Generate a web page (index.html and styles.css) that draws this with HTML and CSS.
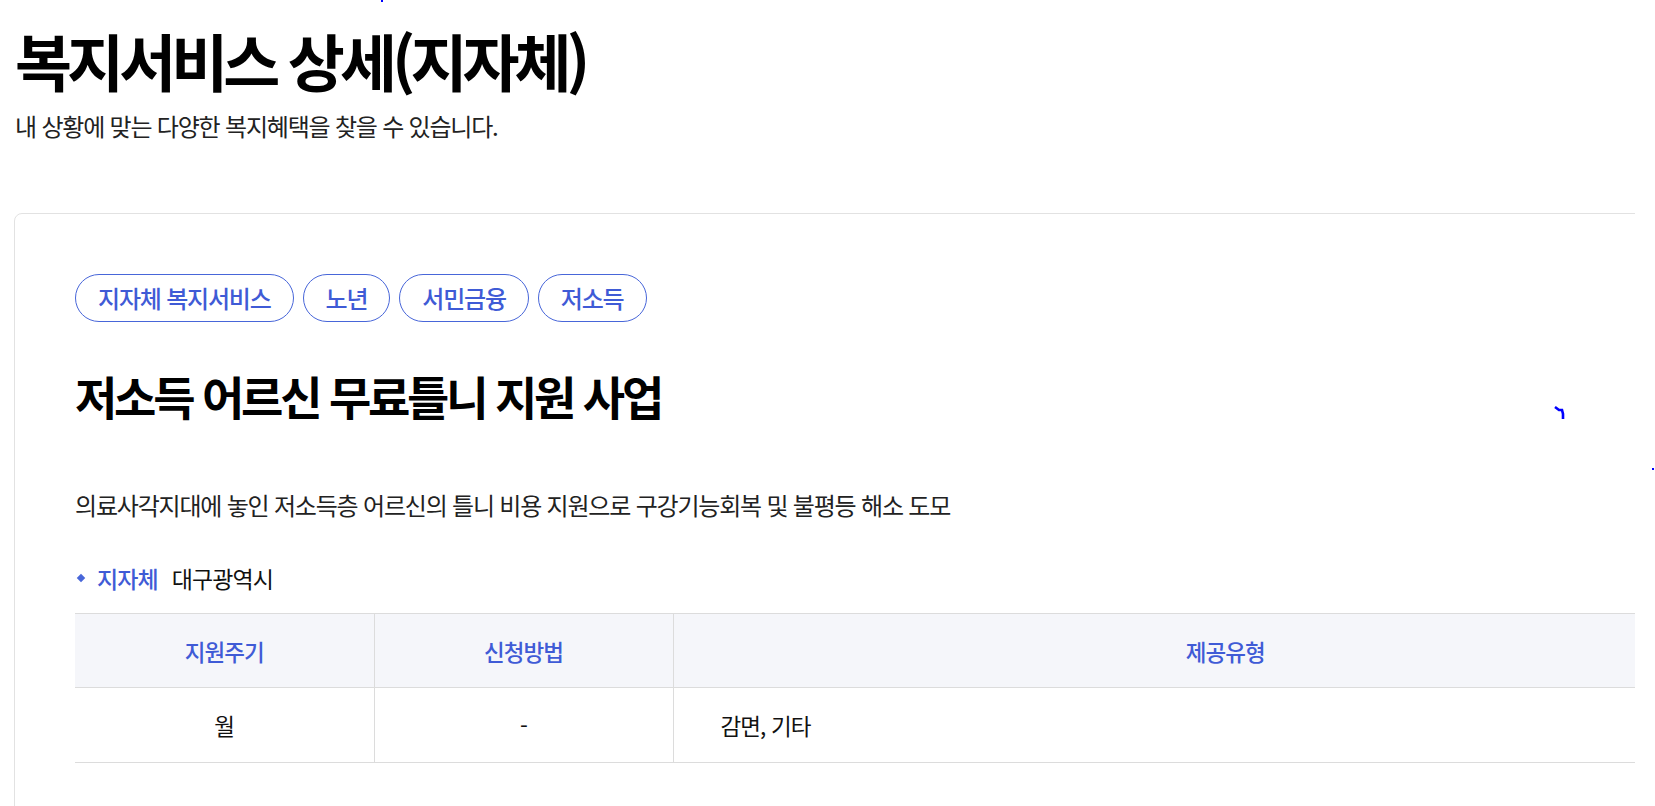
FILE: index.html
```html
<!DOCTYPE html>
<html lang="ko">
<head>
    <meta charset="utf-8">
    <link rel="stylesheet" href="styles.css">
</head>
<body>
    <div class="page">
        <div class="page-head">
            <h1 class="page-title">복지서비스 상세(지자체)</h1>
            <p class="page-lead">내 상황에 맞는 다양한 복지혜택을 찾을 수 있습니다.</p>
        </div>

        <div class="card-clip">
            <div class="card">
                <ul class="tags">
                    <li class="tag">지자체 복지서비스</li>
                    <li class="tag">노년</li>
                    <li class="tag">서민금융</li>
                    <li class="tag">저소득</li>
                </ul>

                <h2 class="service-title">저소득 어르신 무료틀니 지원 사업</h2>

                <p class="service-desc">의료사각지대에 놓인 저소득층 어르신의 틀니 비용 지원으로 구강기능회복 및 불평등 해소 도모</p>

                <div class="info-row">
                    <span class="info-bullet"></span>
                    <span class="info-label">지자체</span>
                    <span class="info-value">대구광역시</span>
                </div>

                <table class="info-table">
                    <colgroup>
                        <col class="col-cycle">
                        <col class="col-method">
                        <col class="col-type">
                    </colgroup>
                    <thead>
                        <tr>
                            <th>지원주기</th>
                            <th>신청방법</th>
                            <th>제공유형</th>
                        </tr>
                    </thead>
                    <tbody>
                        <tr>
                            <td>월</td>
                            <td>-</td>
                            <td class="cell-left">감면, 기타</td>
                        </tr>
                    </tbody>
                </table>
            </div>
        </div>
    </div>

    <!-- stray focus marks seen on the captured page -->
    <svg class="mark mark-top" width="4" height="4"><rect x="1" y="0" width="2" height="2" fill="#0000ff"/></svg>
    <svg class="mark mark-hook" width="14" height="16"><path d="M2 2 L6 5 L9 5 L10 9 L10 14" stroke="#0000ff" stroke-width="2.6" fill="none"/></svg>
    <svg class="mark mark-dot" width="3" height="3"><rect x="0" y="0" width="2" height="2" fill="#0000ff"/></svg>
</body>
</html>
```

FILE: styles.css
```css
body {
    margin: 0;
    font-family: "Noto Sans CJK KR", "Noto Sans", sans-serif;
    color: #111;
    background-color: white;
}

.page {
    padding: 0 20px 0 14px;
}

.page-head {
    padding-top: 20px;
    padding-left: 1px;
}

.page-title {
    margin: 0;
    font-size: 62px;
    line-height: 80px;
    font-weight: 700;
    letter-spacing: -0.08em;
    color: #000;
}

.page-lead {
    margin: 10px 0 0 0;
    font-size: 24px;
    line-height: 32px;
    letter-spacing: -0.05em;
    color: #222;
}

.card-clip {
    margin-top: 71px;
    overflow: hidden;
}

.card {
    width: 1702px;
    padding: 60px 60px 120px 60px;
    border: 1px solid #e2e2e2;
    border-radius: 8px;
}

.tags {
    display: flex;
    gap: 9px;
    margin: 0;
    padding: 0;
    list-style: none;
}

.tag {
    height: 46px;
    line-height: 46px;
    padding: 0 22px;
    border: 1px solid #4866d9;
    border-radius: 24px;
    font-size: 24px;
    font-weight: 500;
    letter-spacing: -0.05em;
    color: #3f5bd6;
}

.service-title {
    margin: 43px 0 0 0;
    font-size: 46px;
    line-height: 60px;
    font-weight: 700;
    letter-spacing: -0.07em;
    color: #000;
}

.service-desc {
    margin: 64px 0 0 0;
    font-size: 24px;
    line-height: 32px;
    letter-spacing: -0.05em;
    color: #222;
}

.info-row {
    display: flex;
    align-items: center;
    margin-top: 41px;
    font-size: 23px;
    line-height: 32px;
    letter-spacing: -0.04em;
}

.info-bullet {
    width: 6px;
    height: 6px;
    margin: 0 13px 0 3px;
    background-color: #4866d9;
    transform: rotate(45deg);
}

.info-label {
    color: #3f5bd6;
    font-weight: 500;
    margin-right: 14px;
}

.info-value {
    color: #111;
}

.info-table {
    width: 1702px;
    margin-top: 19px;
    border-collapse: collapse;
    table-layout: fixed;
    font-size: 22.5px;
    letter-spacing: -0.04em;
}

.col-cycle, .col-method {
    width: 299px;
}

.info-table th,
.info-table td {
    border-top: 1px solid #dcdcdc;
    border-bottom: 1px solid #dcdcdc;
    border-right: 1px solid #dcdcdc;
    text-align: center;
    padding: 0;
}

.info-table th:last-child,
.info-table td:last-child {
    border-right: none;
}

.info-table th {
    height: 73px;
    background-color: #f5f6fa;
    color: #3f5bd6;
    font-weight: 500;
}

.info-table td {
    height: 74px;
    color: #111;
}

.info-table td.cell-left {
    text-align: left;
    padding-left: 47px;
}

.mark {
    position: absolute;
}

.mark-top {
    left: 380px;
    top: 0;
}

.mark-hook {
    left: 1553px;
    top: 405px;
}

.mark-dot {
    left: 1652px;
    top: 468px;
}
```
